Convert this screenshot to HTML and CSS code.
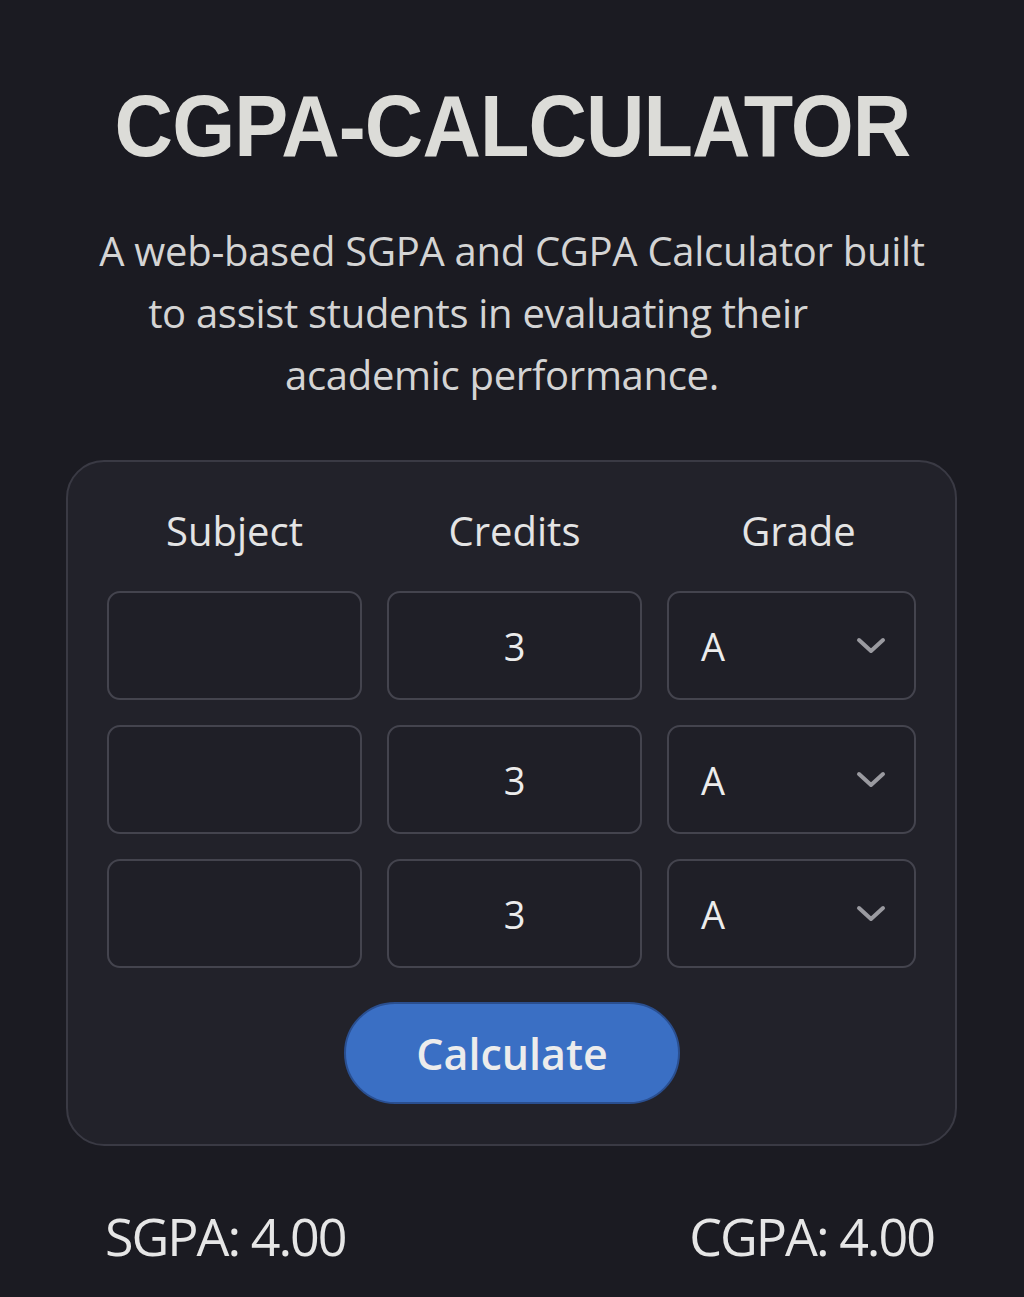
FILE: index.html
```html
<!DOCTYPE html>
<html lang="en">
<head>
<meta charset="utf-8">
<title>CGPA-CALCULATOR</title>
<link rel="stylesheet" href="styles.css">
</head>
<body>
<main class="page">
  <h1 class="title"><span class="title-text">CGPA-CALCULATOR</span></h1>
  <p class="intro">
    <span class="line l1">A web-based SGPA and CGPA Calculator built</span>
    <span class="line l2">to assist students in evaluating their</span>
    <span class="line l3">academic performance.</span>
  </p>
  <section class="card">
    <div class="grid">
      <div class="head">Subject</div>
      <div class="head">Credits</div>
      <div class="head grade">Grade</div>

      <div class="field"></div>
      <div class="field num">3</div>
      <div class="field select"><span>A</span><svg class="chev" viewBox="0 0 30 18"><path d="M3 3 L15 14 L27 3" fill="none" stroke="#9a9aa0" stroke-width="4" stroke-linecap="round" stroke-linejoin="round"/></svg></div>

      <div class="field"></div>
      <div class="field num">3</div>
      <div class="field select"><span>A</span><svg class="chev" viewBox="0 0 30 18"><path d="M3 3 L15 14 L27 3" fill="none" stroke="#9a9aa0" stroke-width="4" stroke-linecap="round" stroke-linejoin="round"/></svg></div>

      <div class="field"></div>
      <div class="field num">3</div>
      <div class="field select"><span>A</span><svg class="chev" viewBox="0 0 30 18"><path d="M3 3 L15 14 L27 3" fill="none" stroke="#9a9aa0" stroke-width="4" stroke-linecap="round" stroke-linejoin="round"/></svg></div>
    </div>
    <div class="actions">
      <button class="btn">Calculate</button>
    </div>
  </section>
  <div class="results">
    <div class="res">SGPA: 4.00</div>
    <div class="res">CGPA: 4.00</div>
  </div>
</main>
</body>
</html>
```
FILE: styles.css
```css
html, body {
  margin: 0;
  padding: 0;
}
body {
  background: #1b1b22;
  color: #e6e6e6;
  font-family: "Open Sans", "Noto Sans", sans-serif;
  height: 1297px;
}
.page {
  padding-top: 80px;
}
.title {
  margin: 0;
  text-align: center;
  font-family: "Liberation Sans", Arial, sans-serif;
  font-weight: 700;
  font-size: 88px;
  line-height: 92px;
  color: #dcdcd8;
  letter-spacing: -1px;
}
.title-text {
  display: inline-block;
  transform: scaleX(0.92);
}
.intro {
  margin: 48px 0 0;
  text-align: center;
  font-size: 40px;
  line-height: 62px;
  color: #d4d4d4;
  letter-spacing: -0.3px;
}
.line {
  display: block;
}
.l2 {
  padding-right: 68px;
}
.l3 {
  padding-right: 20px;
}
.card {
  margin: 54px 67px 0 66px;
  background: #22222a;
  border: 2px solid #3a3a44;
  border-radius: 38px;
  padding: 40px 38px 40px 39px;
}
.grid {
  display: grid;
  grid-template-columns: 255px 255px 249px;
  column-gap: 25px;
  row-gap: 25px;
}
.head {
  text-align: center;
  font-size: 40px;
  line-height: 58px;
  color: #e4e4e4;
  margin-bottom: 6px;
}
.grade {
  padding-left: 14px;
}
.field {
  height: 105px;
  border: 2px solid #44444e;
  border-radius: 13px;
  background: #1f1f27;
  font-size: 38px;
  color: #ececec;
  display: flex;
  align-items: center;
}
.num {
  justify-content: center;
}
.select {
  justify-content: space-between;
  padding: 0 28px 0 32px;
}
.chev {
  width: 30px;
  height: 18px;
}
.actions {
  display: flex;
  justify-content: center;
  margin-top: 34px;
}
.btn {
  width: 336px;
  height: 102px;
  border-radius: 51px;
  border: 2px solid #2a4f90;
  background: #3a6fc4;
  color: #ececec;
  font-family: "Open Sans", "Noto Sans", sans-serif;
  font-size: 43px;
  font-weight: 600;
  cursor: pointer;
}
.results {
  display: flex;
  justify-content: space-between;
  padding: 0 90px 0 105px;
  margin-top: 58px;
}
.res {
  font-size: 52px;
  line-height: 64px;
  color: #e6e6e6;
  letter-spacing: -2px;
}
```
